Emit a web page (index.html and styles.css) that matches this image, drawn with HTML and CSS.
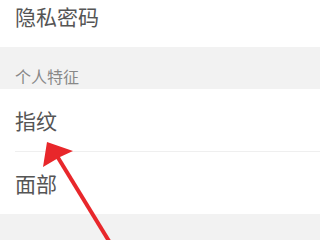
FILE: index.html
```html
<!DOCTYPE html>
<html lang="zh">
<head>
  <meta charset="UTF-8">
  <title>设置</title>
  <link rel="stylesheet" href="styles.css">
</head>
<body>

<!-- 隐私 -->
<div class="group first">
  <div class="row">隐私密码</div>
</div>

<!-- 个人特征 -->
<div class="header">个人特征</div>
<div class="group">
  <div class="row">指纹</div>
  <div class="row">面部</div>
</div>

<!-- 红色箭头标注 -->
<svg class="arrow" width="320" height="240" viewBox="0 0 320 240">
  <line x1="57" y1="156" x2="112" y2="246" stroke="#e8272b" stroke-width="4"/>
  <polygon points="47,142 73,151 60,157 43,167" fill="#e8272b"/>
</svg>

</body>
</html>
```

FILE: styles.css
```css
body {
  margin: 0;
  background: #f2f2f2;
  font-family: "Noto Sans CJK SC", "Noto Sans", sans-serif;
  width: 320px;
  height: 240px;
  overflow: hidden;
  position: relative;
}
.group {
  background: #fff;
}
.group.first {
  margin-top: -16px;
}
.row {
  margin-left: 15px;
  height: 62px;
  display: flex;
  align-items: center;
  font-size: 21px;
  color: #555;
}
.first .row {
  height: 63px;
}
.row + .row {
  border-top: 1px solid #efefef;
  height: 62px;
}
.header {
  padding: 19px 15px 3px;
  line-height: 20px;
  font-size: 16px;
  color: #888;
}
.arrow {
  position: absolute;
  left: 0;
  top: 0;
}
```
